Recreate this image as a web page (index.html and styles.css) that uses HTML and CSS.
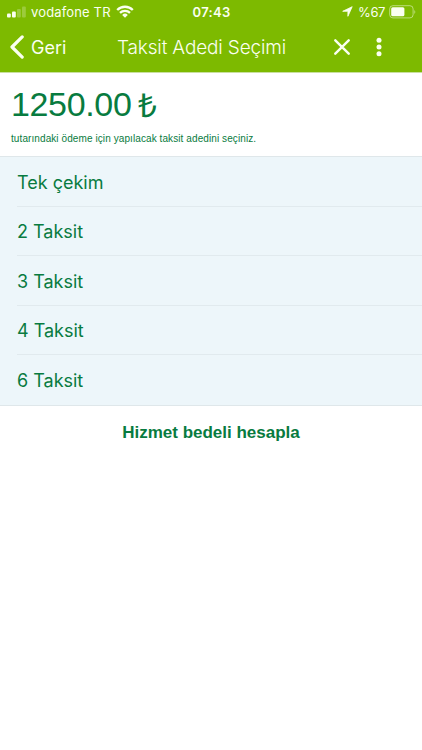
FILE: index.html
```html
<!DOCTYPE html>
<html lang="tr">
<head>
<meta charset="utf-8">
<title>Taksit Adedi Seçimi</title>
<link rel="stylesheet" href="styles.css">
</head>
<body>
<header class="header">
  <div class="status">
    <div class="status-left">
      <svg class="signal" width="20" height="12" viewBox="0 0 20 12" fill="currentColor"><rect x="0" y="7.6" width="3.8" height="3.8" rx="1"/><rect x="5" y="5.6" width="3.8" height="5.8" rx="1"/><g opacity=".25"><rect x="10" y="3" width="3.8" height="8.4" rx="1"/><rect x="15" y=".4" width="3.8" height="11" rx="1"/></g></svg>
      <span class="carrier">vodafone TR</span>
      <svg class="wifi" width="18" height="13" viewBox="0 0 18 13" fill="none" stroke="currentColor" stroke-width="2.3"><path d="M1.2 5a11 11 0 0 1 15.6 0M4 7.9a7.1 7.1 0 0 1 10 0"/><path d="M6.2 9.9a4 4 0 0 1 5.6 0L9 12.8z" fill="currentColor" stroke="none"/></svg>
    </div>
    <span class="time">07:43</span>
    <div class="status-right">
      <svg class="location" width="11" height="11" viewBox="0 0 11 11" fill="currentColor" stroke="currentColor" stroke-width=".8" stroke-linejoin="round"><path d="M10.2.7 5.9 10.3V5.3H.7z"/></svg>
      <span class="percent">%67</span>
      <svg class="battery" width="27" height="14" viewBox="0 0 27 14"><rect x=".7" y=".7" width="23.4" height="12.2" rx="3.2" fill="none" stroke="currentColor" stroke-opacity=".5"/><rect x="2.2" y="2.3" width="13.2" height="9" rx="1.5" fill="currentColor"/><path d="M25.3 4.9q2 2 0 4z" fill="currentColor" opacity=".5"/></svg>
    </div>
  </div>
  <nav class="nav">
    <div class="back">
      <svg width="15" height="24" viewBox="0 0 15 24" fill="none" stroke="currentColor" stroke-width="3.2" stroke-linecap="round" stroke-linejoin="round"><path d="M12.2 1.9 2 12l10.2 10.1"/></svg>
      <span class="back-label">Geri</span>
    </div>
    <h1 class="title">Taksit Adedi Seçimi</h1>
    <div class="actions">
      <svg width="16" height="16" viewBox="0 0 16 16" stroke="currentColor" stroke-width="2.4" stroke-linecap="round"><path d="m1.3 1.3 13.4 13.4M14.7 1.3 1.3 14.7"/></svg>
      <svg width="6" height="20" viewBox="0 0 6 20" fill="currentColor"><circle cx="3" cy="3.2" r="2.5"/><circle cx="3" cy="10" r="2.5"/><circle cx="3" cy="16.8" r="2.5"/></svg>
    </div>
  </nav>
</header>
<main>
  <section class="summary">
    <p class="amount"><span class="number">1250.00</span><span class="currency">₺</span></p>
    <p class="hint"><span>tutarındaki ödeme için yapılacak taksit adedini seçiniz.</span></p>
  </section>
  <ul class="options">
    <li><span>Tek çekim</span></li>
    <li><span>2 Taksit</span></li>
    <li><span>3 Taksit</span></li>
    <li><span>4 Taksit</span></li>
    <li><span>6 Taksit</span></li>
  </ul>
  <div class="calculate"><span>Hizmet bedeli hesapla</span></div>
</main>
</body>
</html>
```
FILE: styles.css
```css
* { box-sizing: border-box; }
body, p, h1, ul { margin: 0; padding: 0; }
body {
  min-height: 750px;
  background: #fff;
  color: #087b40;
  font-family: Inter, "Liberation Sans", sans-serif;
}
svg { display: block; flex: none; }
span, h1 { white-space: nowrap; }
.header {
  height: 73px;
  background: #7dba00;
  border-bottom: 1px solid #c9dfa0;
  color: #fafff0;
}
.status {
  display: grid;
  grid-template-columns: 1fr auto 1fr;
  align-items: center;
  height: 23px;
  padding: 0 6px 0 7px;
  font-size: 13px;
}
.status-left, .status-right { display: flex; align-items: center; }
.status-right { justify-content: flex-end; }
.carrier { margin-left: 4px; letter-spacing: 0.15px; }
.wifi { margin-left: 5px; }
.time { font-weight: 600; letter-spacing: 0.3px; }
.percent { margin: 0 4px 0 5px; letter-spacing: -0.4px; }
.nav {
  display: grid;
  grid-template-columns: 117px 1fr auto;
  align-items: center;
  height: 48px;
}
.back { display: flex; align-items: center; gap: 6px; padding-left: 10px; }
.back-label { font-size: 18px; }
.title { font-size: 19px; font-weight: 300; letter-spacing: -0.15px; }
.actions { display: flex; align-items: center; gap: 26px; padding-right: 40px; }
.summary { height: 83px; padding: 10px 11px 0; }
.amount {
  display: flex;
  align-items: center;
  gap: 7px;
  height: 42px;
  font-family: "Liberation Sans", sans-serif;
  font-size: 34px;
  letter-spacing: -0.35px;
}
.currency { font-size: 33px; }
.hint {
  margin-top: 7px;
  font: 10px/14px "Liberation Sans", sans-serif;
  letter-spacing: 0.09px;
}
.options {
  list-style: none;
  padding-left: 17px;
  background: #edf6fa;
  border-top: 1px solid #dfe7ea;
  border-bottom: 1px solid #dfe7ea;
  font-size: 18px;
}
.options li {
  display: flex;
  align-items: center;
  height: 49.5px;
  padding-top: 2px;
  border-bottom: 1px solid #e1eaee;
}
.options li:last-child { border-bottom: 0; }
.calculate {
  display: flex;
  justify-content: center;
  align-items: center;
  height: 54px;
  font: bold 17px "Liberation Sans", sans-serif;
}
```
